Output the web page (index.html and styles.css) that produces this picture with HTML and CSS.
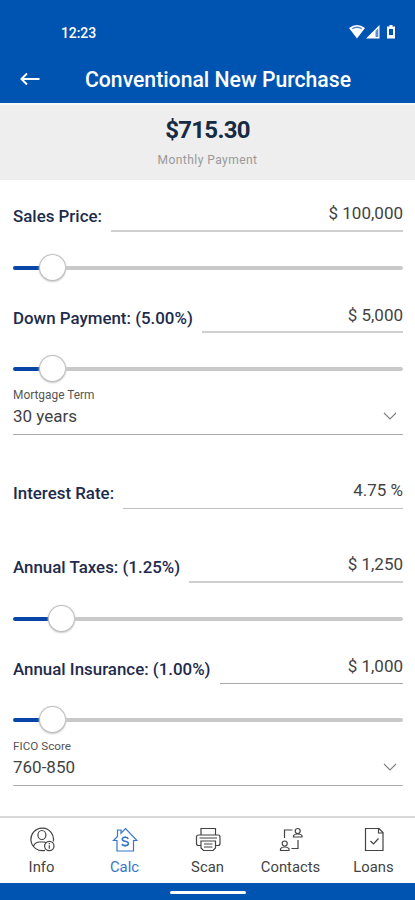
FILE: index.html
```html
<!DOCTYPE html>
<html lang="en">
<head>
<meta charset="utf-8">
<title>Conventional New Purchase</title>
<link rel="stylesheet" href="styles.css">
</head>
<body>
<div class="app">
  <header class="header">
    <div class="status">
      <span class="clock">12:23</span>
      <svg class="status-icons" width="48" height="16" viewBox="0 0 48 16">
        <path d="M0 4Q8-2 16 4L8 14.500Z" fill="#fff"/>
        <path d="M3.300 4.700Q8 1.700 12.700 4.700" fill="none" stroke="#4a83c9" stroke-width="1.400"/>
        <path d="M17 14.500L30.500 1V14.500Z" fill="#fff"/>
        <path d="M26.500 7L29.300 4.300V13H26.500Z" fill="#5c8fd0"/>
        <path d="M38 2.500h2.500V1h3v1.500H46V14.500h-8z" fill="#fff"/>
        <path d="M40 5h4v6h-4z" fill="#0054b1"/>
      </svg>
    </div>
    <div class="titlebar">
      <svg class="back" width="20" height="14" viewBox="0 0 20 14"><path d="M19.500 7H2M7 1.500L1.500 7L7 12.500" fill="none" stroke="#fff" stroke-width="2"/></svg>
      <h1 class="title">Conventional New Purchase</h1>
    </div>
  </header>
  <section class="summary">
    <div class="amount">$715.30</div>
    <div class="caption">Monthly Payment</div>
  </section>
  <main class="form">
    <div class="field"><label class="label">Sales Price:</label><span class="value thick">$ 100,000</span></div>
    <div class="slider"><span class="fill"></span><span class="thumb"></span><span class="rest"></span></div>
    <div class="field"><label class="label down">Down Payment: (5.00%)</label><span class="value thick low">$ 5,000</span></div>
    <div class="slider"><span class="fill"></span><span class="thumb"></span><span class="rest"></span></div>
    <div class="select">
      <span class="select-label">Mortgage Term</span>
      <div class="select-row"><span>30 years</span><svg width="14" height="8" viewBox="0 0 14 8"><path d="M1 1L7 7L13 1" fill="none" stroke="#808080" stroke-width="1.100"/></svg></div>
    </div>
    <div class="field spaced"><label class="label">Interest Rate:</label><span class="value">4.75 %</span></div>
    <div class="field spaced"><label class="label">Annual Taxes: (1.25%)</label><span class="value thick">$ 1,250</span></div>
    <div class="slider"><span class="fill wide"></span><span class="thumb"></span><span class="rest"></span></div>
    <div class="field"><label class="label down">Annual Insurance: (1.00%)</label><span class="value dark low">$ 1,000</span></div>
    <div class="slider"><span class="fill"></span><span class="thumb"></span><span class="rest"></span></div>
    <div class="select">
      <span class="select-label fico">FICO Score</span>
      <div class="select-row"><span>760-850</span><svg width="14" height="8" viewBox="0 0 14 8"><path d="M1 1L7 7L13 1" fill="none" stroke="#808080" stroke-width="1.100"/></svg></div>
    </div>
  </main>
  <nav class="tabs">
    <a class="tab">
      <svg width="26" height="26" viewBox="0 0 26 26"><path d="M16 24.300A11.300 11.300 0 1 1 24.300 15.500M4.500 20.500Q5.500 16.500 10 16H15.500L17.500 17"/><ellipse cx="12.900" cy="9" rx="4" ry="4.500"/><circle cx="20.300" cy="20" r="4.700"/><path d="M20.300 19.300v3.500M20.300 17v1.200"/></svg>
      <span>Info</span>
    </a>
    <a class="tab active">
      <svg width="26" height="26" viewBox="0 0 26 26"><path d="M5 14.500V25H21.500V14.500H25L13.500 2.500L9 7.200V4H5.500V10.500L1.500 14.500Z"/><path d="M16.200 13Q15.700 11.300 13.200 11.300Q10.300 11.300 10.300 13.200Q10.300 14.800 13.200 15.200Q16.400 15.700 16.400 17.500Q16.400 19.600 13.200 19.600Q10.500 19.600 10.100 18M13.200 10.200v1.500M13.200 19.300v1.500" stroke-width="1.500"/></svg>
      <span>Calc</span>
    </a>
    <a class="tab">
      <svg width="26" height="26" viewBox="0 0 26 26"><path d="M6 9V2.500H20.500V9M6 19.500H3.500Q1.500 19.500 1.500 17.500V11Q1.500 9 3.500 9H23Q25 9 25 11V17.500Q25 19.500 23 19.500H20.500M4.500 12H22M6 15H20.500V22L18 24.500H8.500L6 22ZM9 18H17.500M9 21H17.500"/></svg>
      <span>Scan</span>
    </a>
    <a class="tab">
      <svg width="26" height="26" viewBox="0 0 26 26"><path d="M6.500 12V4H14.500M20 14V22.500H13.500"/><circle cx="19.700" cy="5" r="2.500"/><path d="M15.500 11V9.500Q16.500 8 19.700 8Q23 8 24 9.500V11Z"/><circle cx="6.700" cy="17.500" r="2.500"/><path d="M2.500 24.500V22.800Q3.500 21 6.700 21Q10 21 11 22.800V24.500Z"/></svg>
      <span>Contacts</span>
    </a>
    <a class="tab">
      <svg width="26" height="26" viewBox="0 0 26 26"><path d="M4.500 2.500H18L22 6.500V24.500H4.500ZM17.500 2.500V7H22M9.500 15L12.500 18L17.500 12.500"/></svg>
      <span>Loans</span>
    </a>
  </nav>
  <footer class="home"><span class="pill"></span></footer>
</div>
</body>
</html>
```

FILE: styles.css
```css
* { box-sizing: border-box; }
body { margin: 0; background: #fff; font-family: Roboto, "Liberation Sans", sans-serif; }
.app { display: flex; flex-direction: column; width: 415px; height: 900px; overflow: hidden; }
.header { height: 103px; background: #0054b1; color: #fff; }
.status { display: flex; justify-content: space-between; padding: 24px 18px 0 61px; height: 56px; }
.clock { font-size: 14px; line-height: 18px; font-weight: 500; letter-spacing: -.1px; }
.titlebar { display: flex; align-items: center; height: 46px; padding-left: 20px; }
.title { margin: 0 0 0 45px; padding-top: 2px; font-size: 21.200px; font-weight: 500; line-height: 28px; white-space: nowrap; }
.summary { height: 77px; padding-top: 11px; background: #eee; border-top: 2px solid #f5f7fb; text-align: center; }
.amount { font-size: 24px; line-height: 28px; font-weight: 700; letter-spacing: -.7px; color: #172b42; }
.caption { margin-top: 7px; font-size: 12px; line-height: 18px; letter-spacing: .45px; color: #999; }
.form { height: 636px; padding: 22px 12px 0 13px; }
.field { display: flex; height: 30px; gap: 9px; margin-top: 22px; white-space: nowrap; }
.field:first-child { margin-top: 0; }
.field.spaced { margin-top: 44px; }
.label { font-size: 16.900px; line-height: 29px; font-weight: 500; color: #1d2b4c; }
.label.down { line-height: 31px; }
.value { flex: 1; border-bottom: 1px solid #c0c0c0; text-align: right; font-size: 17px; line-height: 22px; color: #424242; }
.value.low { line-height: 25px; }
.value.thick { border-bottom: 2px solid #cfcfcf; }
.value.dark { border-color: #aaa; }
.slider { display: flex; align-items: center; height: 27px; margin-top: 22px; }
.fill { width: 27px; height: 4px; border-radius: 2px 0 0 2px; background: #0746a6; }
.fill.wide { width: 36px; }
.thumb { width: 25px; height: 25px; border-radius: 50%; background: #fff; box-shadow: 0 0 1px 1px #bbb, 0 1px 2px 1px #ccc; }
.rest { flex: 1; height: 4px; border-radius: 0 2px 2px 0; background: #c9c9c9; }
.select { margin-top: 5px; height: 48px; border-bottom: 1px solid #ababab; }
.select-label { display: block; font-size: 11.900px; line-height: 16px; color: #555; }
.select-label.fico { font-size: 11.700px; }
.select-row { display: flex; justify-content: space-between; align-items: center; height: 25px; padding-right: 6px; font-size: 17px; color: #424242; }
.tabs { display: grid; grid-template-columns: repeat(5, 1fr); height: 67px; border-top: 2px solid #d9d9d9; }
.tab { display: flex; flex-direction: column; align-items: center; padding-top: 8px; gap: 6px; font-size: 14.800px; line-height: 18px; color: #434343; }
.tab svg { fill: none; stroke: currentColor; stroke-width: 1.200; }
.tab.active { color: #3675c9; }
.home { height: 17px; padding-top: 8px; background: #0054b1; }
.pill { display: block; width: 76px; height: 3px; margin: 0 auto; border-radius: 2px; background: #fff; }
```
